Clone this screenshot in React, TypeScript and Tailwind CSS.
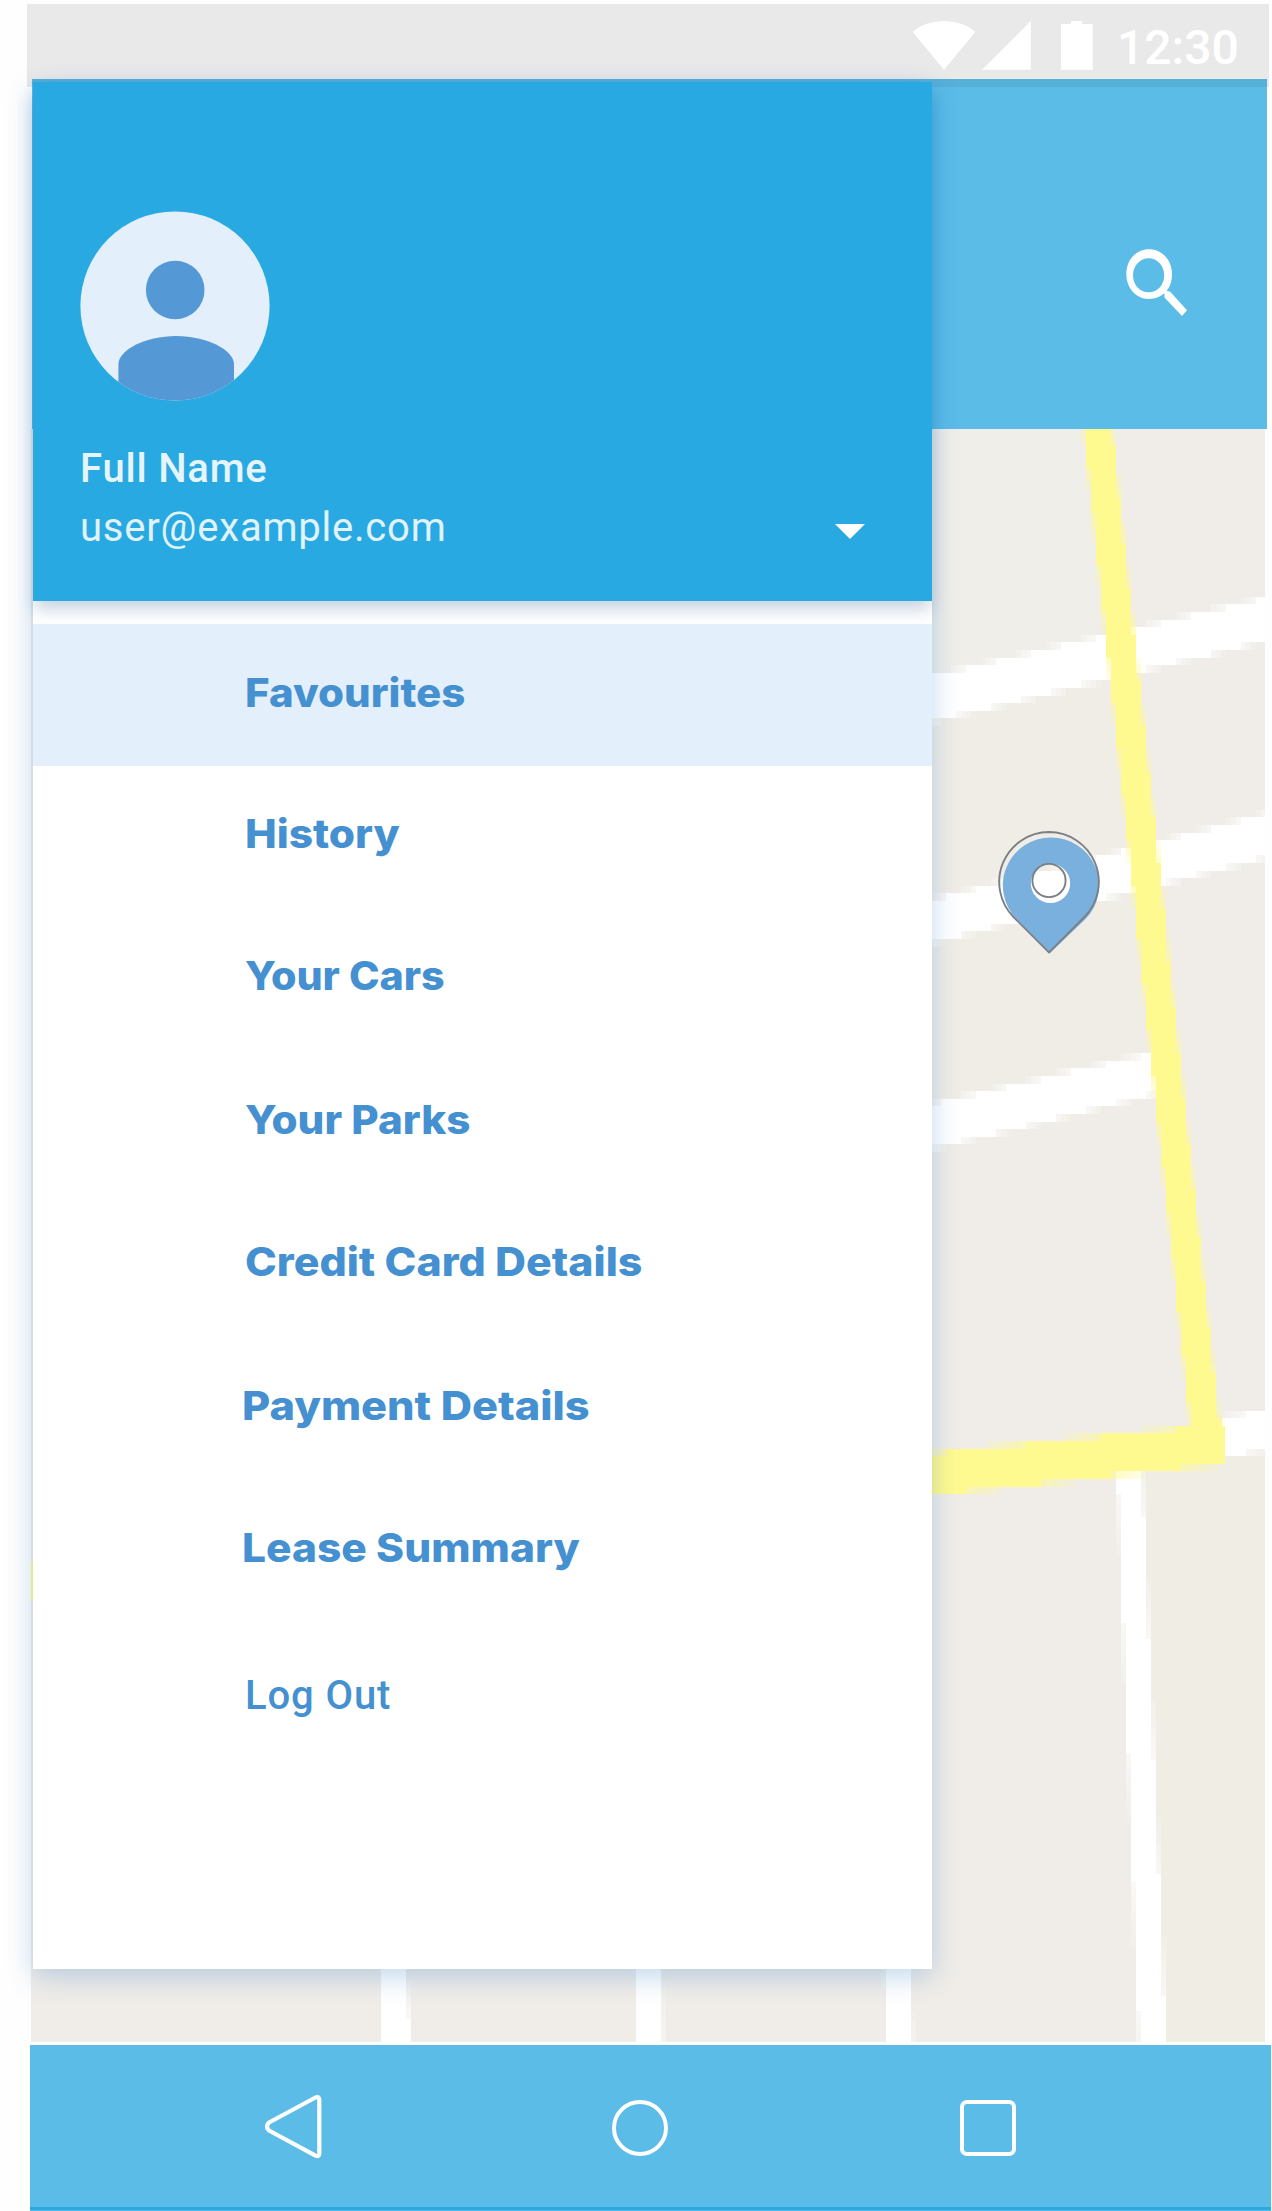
import React from "react";

type Item = { label: string; row: string; text: string };

const MENU: Item[] = [
  { label: "Favourites", row: "h-[142px] bg-[#e3effb] pl-[212px]", text: "scale-x-[1.05]" },
  { label: "History", row: "h-[141px] pl-[212px]", text: "scale-x-[1.06]" },
  { label: "Your Cars", row: "h-[143px] pl-[212px]", text: "scale-x-[1.03]" },
  { label: "Your Parks", row: "h-[144px] pl-[212px]", text: "scale-x-[1.054]" },
  { label: "Credit Card Details", row: "h-[140px] pl-[212px]", text: "scale-x-[1.071]" },
  { label: "Payment Details", row: "h-[148px] pl-[209px]", text: "scale-x-[1.083]" },
  { label: "Lease Summary", row: "h-[136px] pl-[209px]", text: "scale-x-[1.062]" },
];

type Line = [number, number, number, number];
type Road = { a: Line; b: Line; vertical?: boolean; color: string };

// Each road lies between edge lines a and b, given as x1, y1, x2, y2.
const ROADS: Road[] = [
  { a: [932, 676, 1265, 598], b: [932, 722, 1265, 641], color: "#ffffff" },
  { a: [932, 900, 1265, 814], b: [932, 943, 1265, 858], color: "#ffffff" },
  { a: [932, 1104, 1160, 1051], b: [932, 1149, 1160, 1093], color: "#ffffff" },
  { a: [1222, 1417, 1265, 1410], b: [1222, 1457, 1265, 1450], color: "#ffffff" },
  { a: [1117, 1468, 1139, 2042], b: [1142, 1468, 1166, 2042], vertical: true, color: "#ffffff" },
  { a: [380, 1960, 383, 2042], b: [405, 1960, 411, 2042], vertical: true, color: "#ffffff" },
  { a: [635, 1960, 638, 2042], b: [661, 1960, 663, 2042], vertical: true, color: "#ffffff" },
  { a: [884, 1960, 888, 2042], b: [909, 1960, 913, 2042], vertical: true, color: "#ffffff" },
  { a: [1083.5, 429, 1191, 1430], b: [1112, 429, 1220, 1430], vertical: true, color: "#fffa90" },
  { a: [932, 1453, 1225, 1424], b: [932, 1495, 1225, 1464], color: "#fffa90" },
];

const CW = 5;
const CH = 7.605;

const clamp = (v: number) => Math.max(0, Math.min(1, v));

function RoadCells({ road }: { road: Road }) {
  const { a, b, vertical, color } = road;
  const out: React.ReactNode[] = [];
  const along = vertical ? CH : CW;
  const across = vertical ? CW : CH;
  const alongPhase = vertical ? 3.6 : 1;
  const acrossPhase = vertical ? 1 : 3.6;
  const s0 = vertical ? a[1] : a[0];
  const s1 = vertical ? a[3] : a[2];
  const at = (l: Line, s: number) => {
    const t = (s - s0) / (s1 - s0);
    return vertical ? l[0] + (l[2] - l[0]) * t : l[1] + (l[3] - l[1]) * t;
  };
  for (let k = Math.floor((s0 - alongPhase) / along); k * along + alongPhase < s1; k++) {
    const p0 = Math.max(s0, k * along + alongPhase);
    const p1 = Math.min(s1, (k + 1) * along + alongPhase);
    if (p1 <= p0) continue;
    const mid = (p0 + p1) / 2;
    const lo = at(a, mid);
    const hi = at(b, mid);
    const i0 = Math.floor((lo - acrossPhase) / across);
    const i1 = Math.floor((hi - acrossPhase) / across);
    const add = (q0: number, q1: number, o: number, id: string) => {
      if (o < 0.12) return;
      out.push(
        <rect
          key={k + id}
          x={vertical ? q0 : p0}
          y={vertical ? p0 : q0}
          width={vertical ? q1 - q0 : p1 - p0}
          height={vertical ? p1 - p0 : q1 - q0}
          fill={color}
          opacity={o > 0.62 ? 1 : o}
        />
      );
    };
    const c0 = (i0 + 1) * across + acrossPhase;
    const c1 = i1 * across + acrossPhase;
    add(c0 - across, c0, clamp((c0 - lo) / across), "s");
    add(c0, c1, 1, "m");
    add(c1, c1 + across, clamp((hi - c1) / across), "e");
  }
  return <g shapeRendering="crispEdges">{out}</g>;
}

function CityMap() {
  return (
    <svg viewBox="31 429 1234 1613" className="ml-[31px] block h-[1613px] w-[1234px]">
      <rect x="31" y="429" width="1234" height="1613" fill="#f0ede8" />
      <polygon points="932,429 1088,429 1110,640 932,680" fill="#efeee9" />
      <polygon points="932,720 1112,680 1145,1060 932,1104" fill="#f0ede6" />
      <polygon points="1145,1462 1265,1455 1265,2042 1164,2042" fill="#f0ede5" />
      {ROADS.map((r, i) => (
        <RoadCells key={i} road={r} />
      ))}
      <rect x="31" y="1561" width="3" height="40" fill="#fffa90" />
      <path
        fillRule="evenodd"
        fill="#7ab0dd"
        d="M1051 837.5 A48 48 0 0 0 1017 919.5 L1050 953 L1085 919.500 A48 48 0 0 0 1051 837.500Z M1050.500 863.700 a19.700 19.700 0 1 1 0 39.400 a19.700 19.700 0 1 1 0 -39.400Z"
      />
      <path
        fill="none"
        stroke="#7b8087"
        strokeWidth="1.900"
        d="M1049 832 A50 50 0 0 0 1013.500 917 L1049 952.500 L1084.500 917 A50 50 0 0 0 1049 832Z"
      />
      <circle cx="1049" cy="880.500" r="16.600" fill="none" stroke="#7b8087" strokeWidth="1.900" />
    </svg>
  );
}

function StatusBar() {
  return (
    <div className="ml-[27px] flex h-[83px] w-[1242px] bg-[#e9e9e9]">
      <svg viewBox="912 17 182 56" className="mt-[13px] ml-[885px] h-[56px] w-[182px]" fill="#fff">
        <path d="M912.500 31.700 Q926 21 944 21 Q962 21 975.500 31.700 L944 69.800Z" />
        <path d="M1030.800 21 V69.800 H982Z" />
        <path d="M1071 21 H1082.300 V24 H1092.700 V69.700 H1061 V24 H1071Z" />
      </svg>
      <span className="mt-[14px] ml-[23px] h-[60px] font-[Roboto] text-[48px] leading-[60px] font-medium text-white">
        12:30
      </span>
    </div>
  );
}

function Avatar() {
  return (
    <svg viewBox="0 0 190 190" className="block h-[190px] w-[190px]">
      <clipPath id="face">
        <circle cx="95" cy="95" r="94.600" />
      </clipPath>
      <circle cx="95" cy="95" r="94.600" fill="#e3effb" />
      <g clipPath="url(#face)" fill="#5499d5">
        <circle cx="95.200" cy="79" r="29.300" />
        <path d="M38.400 190 V153.500 C38.400 139 65 125 96.200 125 C127 125 154 139 154 153.500 V190Z" />
      </g>
    </svg>
  );
}

function Drawer() {
  return (
    <aside className="absolute top-[82px] left-[33px] flex h-[1887px] w-[899px] flex-col bg-white shadow-[0_8px_26px_rgba(0,95,190,0.24)]">
      <header className="h-[519px] bg-[#29a9e2] pt-[129px] pl-[47px] shadow-[0_10px_16px_-2px_rgba(30,80,140,0.26)]">
        <Avatar />
        <div className="mt-[43px] font-[Roboto] text-[40px] leading-[50px] font-medium tracking-[0.8px] text-[#e6f5fc]">
          Full Name
        </div>
        <div className="mt-[9px] flex items-center">
          <span className="w-[755px] font-[Roboto] text-[40px] leading-[50px] tracking-[0.78px] text-[#e0f3fb]">
            user@example.com
          </span>
          <svg viewBox="0 0 30 15" className="mt-[7px] h-[15px] w-[30px]">
            <path d="M0 0H30L15 15Z" fill="#fff" />
          </svg>
        </div>
      </header>
      <nav className="relative mt-[23px] flex flex-col text-[#4490d1]">
        {MENU.map((m) => (
          <a key={m.label} className={"flex items-center pb-[5px] " + m.row}>
            <span
              className={"origin-left font-[Inter] text-[40px] leading-[50px] font-extrabold whitespace-nowrap " + m.text}
            >
              {m.label}
            </span>
          </a>
        ))}
        <a className="flex h-[156px] items-center pl-[212px]">
          <span className="font-[Roboto] text-[40px] leading-[50px] font-medium tracking-[0.9px]">Log Out</span>
        </a>
      </nav>
    </aside>
  );
}

function SystemNav() {
  return (
    <footer className="mt-[3px] ml-[30px] flex h-[166px] w-[1241px] flex-col bg-[#5bbce8]">
      <div className="flex h-[162px] items-start pl-[235px]">
        <svg viewBox="265 2095 57 64" className="mt-[50px] h-[64px] w-[57px]">
          <path
            d="M269 2122.500 L315.500 2097.500 Q319.300 2096 319.300 2100 V2153.500 Q319.300 2157.500 315.500 2155.700 L269 2130.500 Q265 2126.500 269 2122.500Z"
            fill="none"
            stroke="#fff"
            strokeWidth="4.200"
            strokeLinejoin="round"
          />
        </svg>
        <div className="mt-[55px] ml-[290px] h-[56px] w-[56px] rounded-full border-[4px] border-white" />
        <div className="mt-[55px] ml-[292px] h-[56px] w-[56px] rounded-[7px] border-[4px] border-white" />
      </div>
      <div className="h-[3px] bg-[#29a9e2]" />
    </footer>
  );
}

export default function App() {
  return (
    <div className="relative flex h-[2211px] w-[1272px] flex-col overflow-hidden bg-[#fefefe] pt-[4px]">
      <StatusBar />
      <div className="mt-[-8px] ml-[32px] h-[350px] w-[1235px] border-t-[8px] border-[#57b0d8] bg-[#5bbce8]">
        <svg viewBox="1126 249 62 68" className="mt-[162px] ml-[1094px] block h-[68px] w-[62px]">
          <path
            fillRule="evenodd"
            fill="#fff"
            d="M1149 249.300 C1162 249.300 1172 260 1172 274 C1172 281 1170 287 1166.500 291 L1170 291.500 L1187 310.200 L1182 316 L1164.500 297.500 L1164.300 293.300 C1160 297 1155 299 1149 299 C1136 299 1126.300 288 1126.300 274 C1126.300 260 1136 249.300 1149 249.300Z M1148.700 258.300 C1140 258.300 1133 266 1133 275.300 C1133 285 1140 292.300 1148.700 292.300 C1157.500 292.300 1164.200 285 1164.200 275.300 C1164.200 266 1157.500 258.300 1148.700 258.300Z"
          />
        </svg>
      </div>
      <CityMap />
      <SystemNav />
      <Drawer />
    </div>
  );
}
